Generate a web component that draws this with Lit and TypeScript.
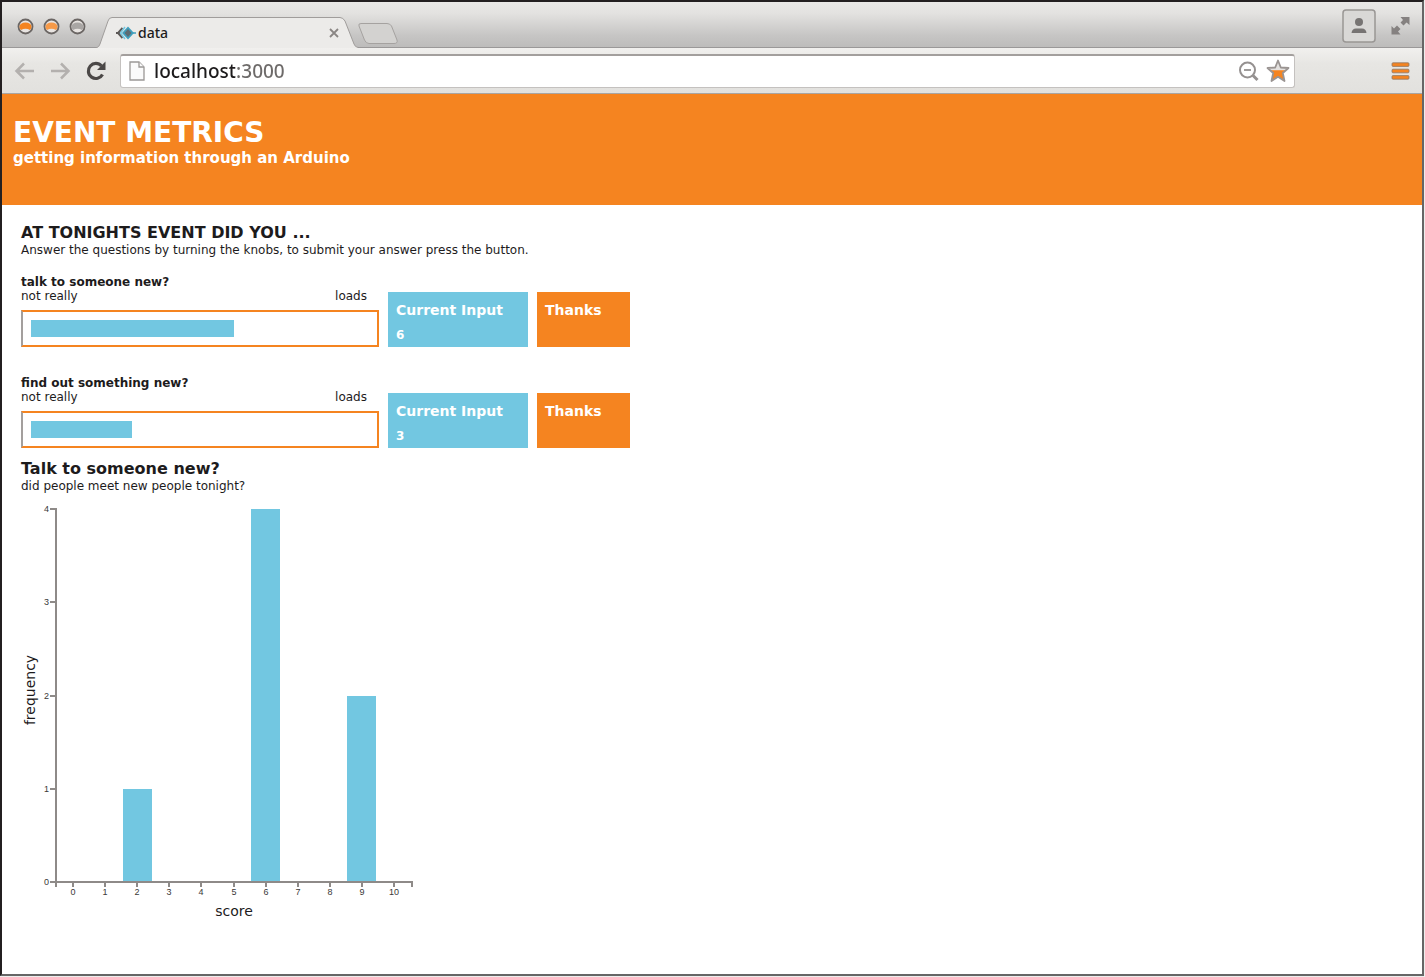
import { LitElement, html, svg, css } from "lit";
import { customElement, property } from "lit/decorators.js";

interface Question {
  id: string;
  label: string;
  value: number;
}

const MAX_SCORE = 10;

@customElement("browser-chrome")
class BrowserChrome extends LitElement {
  @property() heading = "";
  @property() address = "";

  static styles = css`
    :host {
      display: block;
      font-family: "Noto Sans", "Open Sans", sans-serif;
    }
    button {
      border: 0;
      padding: 0;
      background: none;
      display: block;
      line-height: 0;
    }
    svg {
      display: block;
    }
    .strip {
      display: flex;
      height: 46px;
      box-sizing: border-box;
      border-bottom: 1px solid #9a9898;
      background: linear-gradient(#e9e8e6 0%, #e3e2e0 25%, #c6c5c4 75%, #bdbcbb 100%);
    }
    .lights {
      display: flex;
      align-items: center;
      gap: 9px;
      padding: 4px 10px 0 15px;
    }
    .tab {
      position: relative;
      width: 262px;
      height: 46px;
      flex: none;
    }
    .shape {
      position: absolute;
      left: 0;
      top: 0;
    }
    .tab-row {
      position: relative;
      display: flex;
      align-items: center;
      height: 30px;
      padding: 16px 19px 0 20px;
      font-size: 14px;
      color: #1d1b1c;
      gap: 2px;
    }
    .name {
      flex: 1;
      font-weight: 500;
      line-height: 20px;
    }
    .new-tab {
      align-self: flex-end;
      padding-bottom: 3px;
    }
    .right {
      margin-left: auto;
      display: flex;
      align-items: center;
      gap: 15px;
      padding: 3px 12px 0 0;
    }
    .bar {
      display: flex;
      align-items: center;
      height: 46px;
      box-sizing: border-box;
      border-bottom: 1px solid #a9a5a2;
      background: linear-gradient(#f1f0ee, #e7e6e3 35%, #e2e1de);
      padding: 0 12px;
    }
    .nav {
      display: flex;
      align-items: center;
      gap: 15px;
      width: 106px;
    }
    .field {
      display: flex;
      align-items: center;
      flex: 1;
      height: 34px;
      box-sizing: border-box;
      margin-right: 96px;
      padding: 0 4px 0 8px;
      gap: 7px;
      border: 1px solid #c4c1bf;
      border-top: 2px solid #a39f9d;
      border-radius: 3px;
      background: #fff;
    }
    .url {
      flex: 1;
      min-width: 0;
      border: 0;
      outline: 0;
      padding: 0;
      margin-left: 2px;
      height: 28px;
      font: 500 19px/28px "Noto Sans", "Open Sans", sans-serif;
      color: transparent;
      background: linear-gradient(90deg, #1d1b1c 81px, #6d6a69 81px);
      background-clip: text;
      -webkit-background-clip: text;
    }
  `;

  private light(color: string, name: string) {
    return html`<button aria-label=${name}>
      <svg width="17" height="17" viewBox="0 0 17 17">
        <circle cx="8.5" cy="8.5" r="7" fill="#e8e4e1" stroke="#6b6664" stroke-width="1.800" />
        <path d="M2.500 8.500Q3 4.800 8.500 4.500Q14 4.800 14.500 8.500Q14.500 10.500 13 12Q8.500 9.500 4 12Q2.500 10.500 2.500 8.500Z" fill=${color} />
      </svg>
    </button>`;
  }

  render() {
    return html`
      <div class="strip">
        <div class="lights">
          ${this.light("#f58420", "Close")} ${this.light("#f79a48", "Minimize")}
          ${this.light("#a9a6a4", "Zoom")}
        </div>
        <div class="tab">
          <svg class="shape" width="262" height="46" viewBox="0 0 262 46">
            <path
              d="M0 45.500H1Q3 45 4 42L12 19Q13 15.500 16 15.500H244Q247 15.500 249 19L258 42Q259 45 262 45.500V46H0Z"
              fill="#ecebe9"
            />
            <path
              d="M0 45.500H1Q3 45 4 42L12 19Q13 15.500 16 15.500H244Q247 15.500 249 19L258 42Q259 45 262 45.500"
              fill="none"
              stroke="#a09d9b"
            />
          </svg>
          <div class="tab-row">
            <svg width="20" height="14" viewBox="0 0 20 14" fill="none">
              <path d="M0 7H4M6.500 2L2 7L6.500 12" stroke="#5d5957" stroke-width="2" />
              <path d="M9 1L4.500 7L9 13" stroke="#72c7e1" stroke-width="1.500" />
              <path d="M12 .5L18 7L12 13.500L6 7Z" fill="#3f9fbd" />
              <path d="M12 3L15.500 7L12 11L8.500 7Z" fill="#5d6c73" />
              <path d="M17 7H20" stroke="#3f9fbd" stroke-width="1.500" />
            </svg>
            <span class="name">${this.heading}</span>
            <button aria-label="Close tab">
              <svg width="10" height="10" viewBox="0 0 10 10">
                <path d="M1 1L9 9M9 1L1 9" stroke="#8a8684" stroke-width="1.800" />
              </svg>
            </button>
          </div>
        </div>
        <button class="new-tab" aria-label="New tab">
          <svg width="42" height="21" viewBox="0 0 42 21">
            <path
              d="M3 .5H29Q32 .5 33.500 3L39 17Q40 20.500 36 20.500H11Q8 20.500 6.500 17L1 3Q0 .5 3 .5Z"
              fill="#d3d2d0"
              stroke="#a5a2a0"
            />
          </svg>
        </button>
        <div class="right">
          <button aria-label="Profile">
            <svg width="34" height="34" viewBox="0 0 34 34">
              <rect x="1" y="1" width="32" height="32" rx="3" fill="#d9d8d6" stroke="#999694" stroke-width="1.500" />
              <circle cx="17" cy="13" r="4" fill="#777473" />
              <path d="M9.500 24Q10 19.500 14 19.500H20Q24 19.500 24.500 24Z" fill="#777473" />
            </svg>
          </button>
          <button aria-label="Full screen">
            <svg width="19" height="20" viewBox="0 0 19 20" fill="#858180">
              <path d="M9.500 1H18.500V9L15.500 6.500L12.500 9.500L9.500 6.500L12 4Z" />
              <path d="M.5 10L3 12.500L6 9.500L9.500 13L7 15.500L9.500 18.500H.5Z" />
            </svg>
          </button>
        </div>
      </div>
      <div class="bar">
        <div class="nav">
          <button aria-label="Back">
            <svg width="21" height="18" viewBox="0 0 21 18" fill="none" stroke="#b3b0ae" stroke-width="2.500">
              <path d="M20 9H3M10 1.500L2.500 9L10 16.500" />
            </svg>
          </button>
          <button aria-label="Forward">
            <svg width="21" height="18" viewBox="0 0 21 18" fill="none" stroke="#b3b0ae" stroke-width="2.500">
              <path d="M1 9H18M11 1.500L18.500 9L11 16.500" />
            </svg>
          </button>
          <button aria-label="Reload">
            <svg width="21" height="20" viewBox="0 0 21 20">
              <path d="M16.500 13.500A7.500 7.500 0 1 1 15.500 5" fill="none" stroke="#4b4847" stroke-width="3.200" />
              <path d="M19.500 .5V9H11Z" fill="#4b4847" />
            </svg>
          </button>
        </div>
        <div class="field">
          <svg width="16" height="20" viewBox="0 0 16 20" fill="#fafafa" stroke="#9b9896" stroke-width="1.300">
            <path d="M1 1H10L15 6V19H1Z" />
            <path d="M10 1V6H15" />
          </svg>
          <input class="url" type="text" aria-label="Address" .value=${this.address} />
          <button aria-label="Zoom out">
            <svg width="21" height="21" viewBox="0 0 21 21" fill="none" stroke="#959190">
              <circle cx="9.500" cy="9" r="7.500" stroke-width="2" />
              <path d="M6 9H13" stroke-width="1.800" />
              <path d="M15 14.500L19.500 19" stroke-width="3" />
            </svg>
          </button>
          <button aria-label="Bookmark">
            <svg width="24" height="24" viewBox="0 0 24 24">
              <path
                d="M12 1.500L14.800 8.500L22.500 9L16.800 14L18.500 22L12 17.800L5.500 22L7.200 14L1.500 9L9.200 8.500Z"
                fill="#e4e1df"
              />
              <path d="M4 11.300H20L16.800 14L18.500 22L12 17.800L5.500 22L7.200 14Z" fill="#f58420" />
              <path
                d="M12 1.500L14.800 8.500L22.500 9L16.800 14L18.500 22L12 17.800L5.500 22L7.200 14L1.500 9L9.200 8.500Z"
                fill="none"
                stroke="#9a9492"
                stroke-width="1.800"
                stroke-linejoin="round"
              />
            </svg>
          </button>
        </div>
        <button aria-label="Menu">
          <svg width="19" height="18" viewBox="0 0 19 18" fill="#f58420" stroke="#8c7868" stroke-width=".8">
            <rect x="1" y=".8" width="17" height="3.600" rx="1" />
            <rect x="1" y="7.200" width="17" height="3.600" rx="1" />
            <rect x="1" y="13.600" width="17" height="3.600" rx="1" />
          </svg>
        </button>
      </div>
    `;
  }
}

@customElement("score-question")
class ScoreQuestion extends LitElement {
  @property({ attribute: false }) question!: Question;

  static styles = css`
    :host {
      display: grid;
      grid-template-columns: 358px 140px 93px;
      column-gap: 9px;
      align-items: end;
      font-size: 12px;
      line-height: 14px;
    }
    .label {
      margin: 0;
      font-size: 12px;
      font-weight: bold;
    }
    .ends {
      display: flex;
      justify-content: space-between;
      padding-right: 12px;
      margin-bottom: 7px;
    }
    .meter {
      box-sizing: border-box;
      height: 37px;
      padding: 8px;
      border: 2px solid #f58420;
      border-left-color: #a39f9d;
    }
    .fill {
      height: 17px;
      background: #72c7e1;
    }
    .box {
      box-sizing: border-box;
      height: 55px;
      padding: 10px 8px 0;
      font-size: 14px;
      line-height: 16px;
      font-weight: bold;
      color: #fff;
      background: #f58420;
    }
    .current {
      background: #72c7e1;
    }
    .value {
      display: block;
      margin-top: 9px;
      font-size: 12px;
    }
  `;

  render() {
    const { id, label, value } = this.question;
    return html`
      <div>
        <h3 class="label" id=${id}>${label}</h3>
        <div class="ends"><span>not really</span><span>loads</span></div>
        <div
          class="meter"
          role="meter"
          aria-labelledby=${id}
          aria-valuemin="0"
          aria-valuemax=${MAX_SCORE}
          aria-valuenow=${value}
        >
          <div class="fill" style="width: ${(value / MAX_SCORE) * 100}%"></div>
        </div>
      </div>
      <div class="box current">Current Input<span class="value">${value}</span></div>
      <div class="box">Thanks</div>
    `;
  }
}

@customElement("frequency-chart")
class FrequencyChart extends LitElement {
  @property({ attribute: false }) counts: number[] = [];

  static styles = css`
    :host {
      display: block;
    }
    svg {
      display: block;
      overflow: visible;
    }
    .axis {
      fill: none;
      stroke: #8e8a88;
      stroke-width: 2;
    }
    .bar {
      fill: #72c7e1;
    }
    .tick {
      font: 9px "Liberation Sans", Arial, sans-serif;
      fill: #3a3837;
    }
    .title {
      font-size: 14px;
      fill: #1d1b1c;
      text-anchor: middle;
    }
    .middle {
      text-anchor: middle;
    }
    .end {
      text-anchor: end;
    }
  `;

  render() {
    const left = 35;
    const top = 10;
    const bottom = 383;
    const right = 391;
    const step = 32.1;
    const barWidth = 29;
    const max = Math.max(...this.counts);
    const center = (i: number) => left + 17 + i * step;
    const x = (i: number) => Math.round(center(i));
    const barX = (i: number) => Math.round(center(i) - barWidth / 2);
    const y = (v: number) => Math.round(bottom - (v / max) * (bottom - top));
    const levels = Array.from({ length: max + 1 }, (_, i) => i);
    return html`
      <svg width="400" height="424" role="img" aria-label="Frequency of each score">
        ${this.counts.map((count, i) =>
          count
            ? svg`<rect class="bar" x=${barX(i)} y=${y(count)} width=${barWidth} height=${bottom - y(count)} />`
            : null
        )}
        <path class="axis" d="M${left - 6} ${top}H${left}V${bottom}H${left - 6}" />
        <path class="axis" d="M${left} ${bottom + 5}V${bottom}H${right}V${bottom + 5}" />
        ${levels.map(
          (v) => svg`
            <path class="axis" d="M${left - 6} ${y(v)}H${left}" />
            <text class="tick end" x=${left - 7} y=${y(v) + 3}>${v}</text>`
        )}
        ${this.counts.map(
          (_, i) => svg`
            <path class="axis" d="M${x(i)} ${bottom}V${bottom + 5}" />
            <text class="tick middle" x=${x(i)} y=${bottom + 13}>${i}</text>`
        )}
        <text class="title" x=${(left + right) / 2} y=${bottom + 34}>score</text>
        <text class="title" transform="translate(14 191) rotate(-90)">frequency</text>
      </svg>
    `;
  }
}

@customElement("app-root")
class AppRoot extends LitElement {
  private questions: Question[] = [
    { id: "talk", label: "talk to someone new?", value: 6 },
    { id: "find", label: "find out something new?", value: 3 },
  ];

  private counts = [0, 0, 1, 0, 0, 0, 4, 0, 0, 2, 0];

  static styles = css`
    :host {
      display: block;
      min-height: 100vh;
      box-sizing: border-box;
      padding: 0 1px 1px 0;
      background: #eeedec;
      font-family: Verdana, "DejaVu Sans", sans-serif;
      color: #1d1b1c;
    }
    .window {
      box-sizing: border-box;
      min-height: calc(100vh - 1px);
      border: 2px solid #666;
      border-top-color: #231f20;
      border-left-color: #231f20;
      background: #fff;
    }
    .banner {
      box-sizing: border-box;
      height: 111px;
      padding: 22px 11px 0;
      background: #f58420;
      color: #fff;
    }
    .banner-title {
      margin: 0;
      font-size: 28px;
      line-height: 34px;
    }
    .banner-text {
      margin: 0;
      font-size: 15px;
      line-height: 16px;
      font-weight: bold;
    }
    .content {
      padding: 19px;
    }
    .heading {
      margin: 0;
      font-size: 16px;
      line-height: 18px;
    }
    .text {
      margin: 0;
      font-size: 12px;
      line-height: 16px;
    }
    .questions {
      display: grid;
      gap: 29px;
      margin: 17px 0 12px;
    }
    .chart {
      display: block;
      margin-top: 5px;
    }
  `;

  render() {
    return html`
      <div class="window">
        <browser-chrome heading="data" address="localhost:3000"></browser-chrome>
        <header class="banner">
          <h1 class="banner-title">EVENT METRICS</h1>
          <p class="banner-text">getting information through an Arduino</p>
        </header>
        <main class="content">
          <h2 class="heading">AT TONIGHTS EVENT DID YOU ...</h2>
          <p class="text">
            Answer the questions by turning the knobs, to submit your answer press the button.
          </p>
          <div class="questions">
            ${this.questions.map((q) => html`<score-question .question=${q}></score-question>`)}
          </div>
          <h2 class="heading">Talk to someone new?</h2>
          <p class="text">did people meet new people tonight?</p>
          <frequency-chart class="chart" .counts=${this.counts}></frequency-chart>
        </main>
      </div>
    `;
  }
}
